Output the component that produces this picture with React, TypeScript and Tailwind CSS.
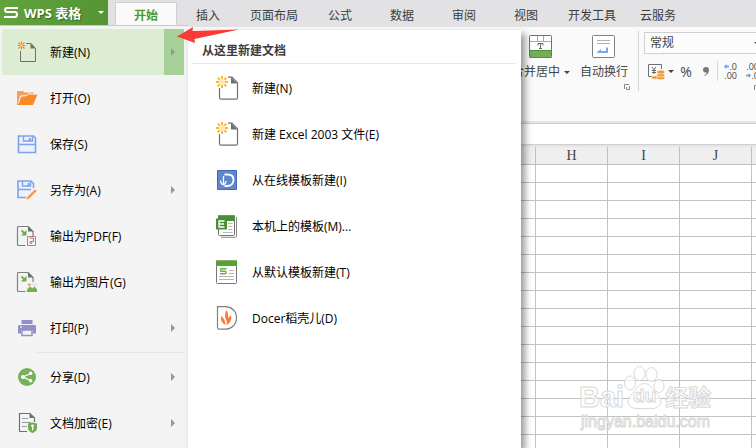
import type { ReactNode } from "react";

const FONT = "font-['Open_Sans','Noto_Sans_CJK_SC',sans-serif]";

const tabs = ["开始", "插入", "页面布局", "公式", "数据", "审阅", "视图", "开发工具", "云服务"];
const columns = ["", "H", "I", "J", ""];
const rows = Array.from({ length: 40 }, (_, i) => i);

function Caret({ className = "" }: { className?: string }) {
  return (
    <svg className={`h-[3px] w-[6px] shrink-0 ${className}`} viewBox="0 0 6 3" aria-hidden="true">
      <path d="M0 0h6L3 3z" fill="currentColor" />
    </svg>
  );
}

function Launcher() {
  return (
    <svg className="size-[6px] shrink-0" viewBox="0 0 6 6" fill="none" stroke="#888" aria-hidden="true">
      <path d="M.5 5V.5H5M5.500 2v3.500H2.500V3" />
    </svg>
  );
}

function Icon({ children, large = false }: { children: ReactNode; large?: boolean }) {
  return large ? (
    <svg className="size-[24px] shrink-0" viewBox="0 0 24 24" fill="none" aria-hidden="true">{children}</svg>
  ) : (
    <svg className="size-[22px] shrink-0" viewBox="0 0 22 22" fill="none" aria-hidden="true">{children}</svg>
  );
}

const NewSmall = (
  <Icon>
    <path d="M10 2.500h5l4.500 5v13h-15V10" stroke="#707070" />
    <path d="M14.500 2l5.500 5.500h-5.500z" fill="#707070" />
    <path d="M5.500 .5v8M1.500 4.500h8M2.500 1.500l6 6M8.500 1.500l-6 6" stroke="#f58a2c" strokeWidth="1.100" />
    <circle cx="5.500" cy="4.500" r="1.200" fill="#fbd9a8" />
  </Icon>
);

const OpenIcon = (
  <Icon>
    <path d="M1 4h6l1.500 1.500H18V9H5l-2.500 9H1z" fill="#f5a05a" />
    <path d="M5 9.500l6-.5 2-1.500h8.500L17 18H2z" fill="#fa8a24" />
    <path d="M2.500 16.500L4.500 9l6-.5 2-1.500h8" stroke="#fff4e8" />
  </Icon>
);

const SaveIcon = (
  <Icon>
    <path d="M3 3h14.500L19.500 5v14.500H2.500V3z" fill="#eff1f6" stroke="#7ba3ef" strokeWidth="1.600" />
    <path d="M7.500 3v5h9V3M2.500 11.500h17" stroke="#7ba3ef" strokeWidth="1.400" />
    <path d="M12.800 5h2v3h-2z" fill="#7ba3ef" />
  </Icon>
);

const SaveAsIcon = (
  <Icon>
    <path d="M10 18.500H2V2h13l2.500 2.500V9" fill="#eef2fa" stroke="#7ba3ef" strokeWidth="1.600" />
    <path d="M6.500 2v5h8V2M2 10.500h13" stroke="#7ba3ef" strokeWidth="1.400" />
    <path d="M11.500 4h2v3h-2z" fill="#7ba3ef" />
    <path d="M10 21l1-3 8-8 2 2-8 8z" fill="#f39a50" stroke="#f4f4f4" strokeWidth=".5" />
  </Icon>
);

const exportPage = (
  <>
    <path d="M9.500 20.500h-7a1 1 0 0 1-1-1v-17a1 1 0 0 1 1-1H12l5 5V11" stroke="#808080" strokeWidth="1.200" />
    <path d="M12 1l5.500 5.500H12z" fill="#707070" />
    <path d="M5.500 5.500l3 3" stroke="#6fae4d" strokeWidth="1.800" />
    <path d="M10.500 5v5.500H5z" fill="#6fae4d" />
  </>
);

const PdfIcon = (
  <Icon>
    {exportPage}
    <path d="M11.500 11.500h8v9h-8z" fill="#faf3f3" stroke="#a58a8a" />
    <path d="M13.500 13h4v3.500H15c-1.500 0-1.500 2 0 2s.5-2-.5-2" stroke="#e06666" />
  </Icon>
);

const PictureIcon = (
  <Icon>
    {exportPage}
    <path d="M11 12h10v9H11z" fill="#e6eef0" />
    <path d="M11 21v-2.500l3-3 2.500 2 2-2 2.500 3V21z" fill="#74ae51" />
    <circle cx="13.300" cy="13.800" r="1.300" fill="#f39a50" />
  </Icon>
);

const PrintIcon = (
  <Icon>
    <path d="M5.500 3h11v4h-11z" fill="#918fcb" />
    <path d="M2 9l1-1h16l1 1v7.500h-3V13H5v3.500H2z" fill="#918fcb" />
    <path d="M6 13h10v5.500H6z" fill="#f4f4f4" stroke="#918fcb" strokeWidth="1.500" />
    <path d="M4 10h2" stroke="#fff" />
  </Icon>
);

const ShareIcon = (
  <Icon>
    <circle cx="11" cy="11" r="9" fill="#78b15c" />
    <path d="M14.500 7.500L7 11l7.500 3.500" stroke="#fff" strokeWidth="1.300" />
    <g fill="#fff"><circle cx="14.700" cy="7.300" r="1.700" /><circle cx="7" cy="11" r="2" /><circle cx="14.700" cy="14.700" r="1.700" /></g>
  </Icon>
);

const EncryptIcon = (
  <Icon>
    <path d="M11 19.500H4a.5.5 0 0 1-.5-.5V1.500H14L18.500 6v4" stroke="#707070" strokeWidth="1.200" />
    <path d="M13.500 1l5 5h-5z" fill="#707070" />
    <path d="M6 6.500h6M6 10.500h9M6 14.500h5" stroke="#999" />
    <path d="M12 11.500l4.500-1 4.500 1v4.500c0 2.500-2 4-4.500 5-2.500-1-4.500-2.500-4.500-5z" fill="#6fae4d" />
    <path d="M16.500 14v4.500M16.500 16.500h1.500" stroke="#fff" /><circle cx="16.500" cy="13.800" r="1.400" fill="#fff" />
  </Icon>
);

const NewLarge = (
  <Icon large>
    <path d="M12 1.200h4l5.500 5.500v15a1.500 1.500 0 0 1-1.500 1.500H5a1.500 1.500 0 0 1-1.500-1.500V12" stroke="#707070" strokeWidth="1.200" />
    <path d="M15 1l6.500 6.500H15z" fill="#707070" />
    <path d="M6 0v3M6 9v3M0 6h3M9 6h3M1.700 1.700l2 2M8.300 8.300l2 2M10.300 1.700l-2 2M3.700 8.300l-2 2" stroke="#fbb62f" strokeWidth="2" />
    <circle cx="6" cy="6" r="3.200" fill="#fde9bd" />
  </Icon>
);

const OnlineTemplate = (
  <Icon large>
    <path d="M1.500 2.500h19v19h-19z" fill="#5f87cb" stroke="#416cb5" />
    <path d="M8.500 6.500h3c4 0 6 2.300 6 5.300s-2 6.200-6.500 6.200H8.500" stroke="#fff" strokeWidth="1.800" />
    <path d="M7.500 17c-2-1-3-2.500-3-4.500M7.500 17V8M7.500 17c2-1 2.500-2.300 2.500-4" stroke="#fff" strokeWidth="1.300" />
  </Icon>
);

const LocalTemplate = (
  <Icon large>
    <path d="M5 23.300h14.500a1 1 0 0 0 1-1V3" stroke="#888" />
    <path d="M2.500 2h16v18.500a1 1 0 0 1-1 1h-14a1 1 0 0 1-1-1z" fill="#fff" stroke="#707070" />
    <path d="M2 1.300h17V7H2z" fill="#4a8f36" />
    <path d="M12 9.500h4.500M12 12.500h4.500M12 15.500h4.500M7 18.500h9.500" stroke="#bbb" />
    <path d="M0 4.500h11v11H0z" fill="#4a8f36" />
    <path d="M8.500 7H3v6h5.500M3 10h5" stroke="#fff" strokeWidth="1.300" />
  </Icon>
);

const DefaultTemplate = (
  <Icon large>
    <path d="M.5 1h20v21.500a1 1 0 0 1-1 1h-18a1 1 0 0 1-1-1z" fill="#fff" stroke="#777" />
    <path d="M0 .5h21V6H0z" fill="#55a331" />
    <path d="M13 10.500h5M13 13.500h5M3 16.500h15M3 19.500h15" stroke="#b5b5b5" />
    <path d="M10.500 8.800H5.200c-1 0-1 2.400 0 2.400h4c1.200 0 1.200 2.600 0 2.600H4" stroke="#68b144" strokeWidth="1.400" />
  </Icon>
);

const DocerIcon = (
  <Icon large>
    <path d="M1.500.7h7.500c6.500 0 11.500 4.300 11.500 11s-5 11.500-11.500 11.500H3a1.500 1.500 0 0 1-1.500-1.500z" fill="#fff" stroke="#808080" strokeWidth="1.200" />
    <path d="M10.500 4c2 3 2.500 8 .5 12-2.500-4-2.500-8-.5-12zM5 10c2.500 1.500 4.500 4.500 4.500 9C6 17.500 4.500 14 5 10zM15 9.500c1 4-.5 7.500-4.500 9.500 0-4.500 1.500-8 4.500-9.500z" fill="#fb7a3c" />
  </Icon>
);

type Entry = { label: string; icon: ReactNode; sub?: boolean };

const fileMenu: Entry[] = [
  { label: "新建(N)", icon: NewSmall, sub: true },
  { label: "打开(O)", icon: OpenIcon },
  { label: "保存(S)", icon: SaveIcon },
  { label: "另存为(A)", icon: SaveAsIcon, sub: true },
  { label: "输出为PDF(F)", icon: PdfIcon },
  { label: "输出为图片(G)", icon: PictureIcon },
  { label: "打印(P)", icon: PrintIcon, sub: true },
];

const shareMenu: Entry[] = [
  { label: "分享(D)", icon: ShareIcon, sub: true },
  { label: "文档加密(E)", icon: EncryptIcon, sub: true },
];

const newMenu: Entry[] = [
  { label: "新建(N)", icon: NewLarge },
  { label: "新建 Excel 2003 文件(E)", icon: NewLarge },
  { label: "从在线模板新建(I)", icon: OnlineTemplate },
  { label: "本机上的模板(M)...", icon: LocalTemplate },
  { label: "从默认模板新建(T)", icon: DefaultTemplate },
  { label: "Docer稻壳儿(D)", icon: DocerIcon },
];

function FileItem({ label, icon, sub, active = false }: Entry & { active?: boolean }) {
  return (
    <button type="button" className={`flex h-[46px] w-full items-center pl-[14px] text-left ${active ? "bg-[#dcedd3]" : ""}`}>
      {icon}
      <span className="ml-3 flex-1 pt-[2px] whitespace-nowrap">{label}</span>
      {sub && (
        <span className={`flex h-full w-5 items-center justify-center ${active ? "bg-[#a6d199]" : ""}`}>
          <svg className="mr-[3px] h-[8px] w-[4px]" viewBox="0 0 4 8" aria-hidden="true">
            <path d="M0 0l4 4-4 4z" fill="#979797" />
          </svg>
        </span>
      )}
    </button>
  );
}

function TitleBar() {
  return (
    <header className="flex h-[27px] shrink-0 items-start bg-[#e2e2e4]">
      <button type="button" className="mr-[7px] flex h-[25px] w-[108px] shrink-0 items-center bg-linear-to-r from-[#62a33e] to-[#569434] pl-1 text-white">
        <svg className="h-[11px] w-[14px]" viewBox="0 0 14 11" fill="none" stroke="#fff" strokeWidth="2" aria-hidden="true">
          <path d="M14 1H3C.5 1 .5 5 3 5h8.500C13.500 5.500 13.500 10 11 10H0" />
        </svg>
        <span className="ml-[6px] flex-1 pt-[2px] text-left text-[13px] font-bold whitespace-nowrap [text-shadow:1px_1px_1px_#35651c]">WPS 表格</span>
        <Caret className="mr-1" />
      </button>
      <nav className="flex h-full flex-1 items-end overflow-hidden">
        {tabs.map((tab, i) => (
          <button
            key={tab}
            type="button"
            className={`h-[25px] min-w-[62px] shrink-0 pt-[2px] whitespace-nowrap ${
              i === 0
                ? "border-x border-t border-[#cfcfd2] bg-[#fafafa] font-bold text-[#4c9a22]"
                : "px-[11px] text-[#3c3c3c]"
            }`}
          >
            {tab}
          </button>
        ))}
      </nav>
    </header>
  );
}

function Ribbon() {
  return (
    <section className="flex h-[94px] shrink-0 items-start overflow-hidden bg-[#fafafa] pt-1 pl-[512px] text-[#444]">
      <div className="flex h-[60px] w-[127px] shrink-0 flex-col border-r border-[#d6d6d8] pt-1">
        <div className="flex gap-[10px]">
          <button type="button" className="flex flex-col items-center gap-[5px]">
            <svg className="size-[24px]" viewBox="0 0 24 24" fill="none" aria-hidden="true">
              <rect x=".5" y=".5" width="22" height="22" rx="1" fill="#fff" stroke="#707070" />
              <path d="M1 6.500h21M8.500 1v5M14.500 1v5" stroke="#aaa" />
              <path d="M1 16h21v6H1z" fill="#74ae58" />
              <path d="M.5 15.500h22M.5 22.500h22" stroke="#4f9038" />
              <path d="M9 10.500v-2h5v2M11.500 8.500v5M10 13.500h3" stroke="#666" />
            </svg>
            <span className="flex h-4 items-center gap-1 whitespace-nowrap">合并居中<Caret /></span>
          </button>
          <button type="button" className="flex flex-col items-center gap-[5px]">
            <svg className="size-[24px]" viewBox="0 0 24 24" fill="none" aria-hidden="true">
              <rect x=".5" y=".5" width="22" height="22" rx="1" fill="#fff" stroke="#808080" />
              <path d="M5 5.500h13M5 8.500h13" stroke="#b0b0b0" />
              <path d="M15 12.500v4.500H8" stroke="#7ba3ef" strokeWidth="2" />
              <path d="M5 17l4-3v4H5z" fill="#7ba3ef" />
            </svg>
            <span className="h-4 leading-4 whitespace-nowrap">自动换行</span>
          </button>
        </div>
        <div className="mt-1 flex justify-end pr-2"><Launcher /></div>
      </div>

      <div className="ml-[5px] flex w-[119px] shrink-0 flex-col pt-px">
        <label className="relative flex">
          <select aria-label="数字格式" className="h-[22px] w-full appearance-none border border-[#d0d0d2] bg-[#fcfcfc] pl-[5px]">
            <option>常规</option>
            <option>数值</option>
            <option>货币</option>
          </select>
          <Caret className="absolute top-[10px] right-[3px]" />
        </label>
        <div className="mt-[7px] flex h-5 items-center">
          <button type="button" aria-label="货币" className="ml-1 flex items-center gap-[3px]">
            <svg className="h-[17px] w-[17px]" viewBox="0 0 17 17" fill="none" aria-hidden="true">
              <path d="M4 13.500H.5v-12h13V6" stroke="#707070" />
              <path d="M4 4l2 2.500L8 4M6 6.500V11M4 7.500h4M4 9.500h4" stroke="#555" strokeWidth=".9" />
              <g fill="#f0983c" stroke="#fff" strokeWidth=".6">
                <ellipse cx="7" cy="14.500" rx="3.500" ry="1.800" />
                <ellipse cx="12.700" cy="14.800" rx="4" ry="2" />
                <ellipse cx="12.700" cy="12" rx="4" ry="2" />
                <ellipse cx="12.700" cy="9" rx="4" ry="2" />
              </g>
            </svg>
            <Caret />
          </button>
          <button type="button" className="ml-[6px] w-3 text-[14px]">%</button>
          <button type="button" aria-label="千位分隔" className="ml-[11px]">
            <svg className="h-[9px] w-[6px]" viewBox="0 0 6 9" aria-hidden="true">
              <path d="M3 0c2 0 3 1.200 3 3 0 3-2 5-4.500 6v-1C3 7.200 3.700 6.500 3.700 5.500 1.500 6 0 4.700 0 3c0-1.800 1.200-3 3-3z" fill="#777" />
            </svg>
          </button>
          <span className="ml-2 h-5 w-px shrink-0 bg-[#d6d6d8]" />
          <button type="button" aria-label="增加小数位数" className="ml-[5px] flex w-[14px] shrink-0 flex-col items-end text-[9px] leading-[9px]">
            <span className="flex items-center"><BlueArrow />.0</span>
            <span>.00</span>
          </button>
          <button type="button" aria-label="减少小数位数" className="ml-2 flex w-[14px] shrink-0 flex-col items-end text-[9px] leading-[9px]">
            <span>.00</span>
            <span className="flex items-center"><BlueArrow flip />.0</span>
          </button>
        </div>
        <div className="mt-1 flex justify-end pr-[3px]"><Launcher /></div>
      </div>
    </section>
  );
}

function BlueArrow({ flip = false }: { flip?: boolean }) {
  return (
    <svg className="h-[5px] w-[5px] shrink-0" viewBox="0 0 5 5" aria-hidden="true">
      <path d={flip ? "M5 2.500L2.500 0v1.700H0v1.600h2.500V5z" : "M0 2.500L2.500 0v1.700H5v1.600H2.500V5z"} fill="#6a97ec" />
    </svg>
  );
}

function Sheet() {
  return (
    <main className="min-h-0 flex-1 overflow-hidden bg-white pl-[464px]">
      <table className="w-[360px] table-fixed border-separate border-spacing-0">
        <thead>
          <tr>
            {columns.map((name, i) => (
              <th key={i} className="h-[18px] w-[72px] border-r border-b border-[#c0c0c0] bg-[#efefef] p-0 pt-px font-['Liberation_Serif',serif] text-[14px] leading-4 font-normal text-[#444]">
                {name}
              </th>
            ))}
          </tr>
        </thead>
        <tbody>
          {rows.map((row) => (
            <tr key={row}>
              {columns.map((_, i) => (
                <td key={i} className="h-[18px] border-r border-b border-[#c3c3c3] p-0" />
              ))}
            </tr>
          ))}
        </tbody>
      </table>
    </main>
  );
}

function FileMenu() {
  return (
    <div className="absolute top-[25px] bottom-0 left-0 flex text-black">
      <nav className="w-[188px] shrink-0 border-t border-[#c8c8c8] bg-[#f4f4f4] pt-[3px] pr-1 pl-[2px]">
        {fileMenu.map((item, i) => (
          <FileItem key={item.label} {...item} active={i === 0} />
        ))}
        <div className="mb-px ml-[35px] h-[2px] border-b border-[#e6e6e6]" />
        {shareMenu.map((item) => (
          <FileItem key={item.label} {...item} />
        ))}
      </nav>
      <section className="mt-[5px] w-[333px] shrink-0 bg-white shadow-[4px_4px_7px_rgba(0,0,0,0.4)]">
        <h2 className="mr-[5px] ml-1 h-[34px] border-b border-[#e8e8e8] pl-[10px] leading-[42px] font-bold text-[#3c3c3c]">从这里新建文档</h2>
        <div className="pt-px">
          {newMenu.map((item) => (
            <button key={item.label} type="button" className="flex h-[46px] w-full items-center gap-3 pl-7 text-left whitespace-nowrap">
              {item.icon}
              <span className="pt-[2px]">{item.label}</span>
            </button>
          ))}
        </div>
      </section>
    </div>
  );
}

function Watermark() {
  return (
    <div className="pointer-events-none absolute top-[364px] left-[579px] w-[136px] text-white/70 [-webkit-text-stroke:1px_#d9d9d9]">
      <div className="flex h-[46px] items-end whitespace-nowrap">
        <span className="font-['Liberation_Sans',sans-serif] text-[29px] leading-[26px] font-bold">Bai</span>
        <div className="relative">
          <svg className="h-[46px] w-[41px]" viewBox="0 0 41 46" fill="#fff" fillOpacity=".7" stroke="#d9d9d9" aria-hidden="true">
            <ellipse cx="6" cy="19" rx="5.500" ry="7" />
            <ellipse cx="15.500" cy="9.500" rx="5.500" ry="7" />
            <ellipse cx="27.500" cy="10.500" rx="5.500" ry="7" />
            <ellipse cx="35" cy="22" rx="5" ry="6.500" />
            <path d="M20.500 19.500c6 0 8 6 12 10s6 8 3 12-9 3-15 3-12 1-15-3-1-8 3-12 6-10 12-10z" />
          </svg>
          <span className="absolute top-[22px] left-[9px] font-['Liberation_Sans',sans-serif] text-[19px] leading-5 font-bold">du</span>
        </div>
        <span className="text-[23px] leading-[26px] font-bold">经验</span>
      </div>
      <div className="pl-[2px] font-['Liberation_Sans',sans-serif] text-[16px] leading-6">jingyan.baidu.com</div>
    </div>
  );
}

export default function App() {
  return (
    <div className={`relative flex h-screen flex-col overflow-hidden bg-white text-[12px] ${FONT}`}>
      <TitleBar />
      <Ribbon />
      <div className="h-[3px] shrink-0 border-b border-[#cfcfd2] bg-[#e4e4e6]" />
      <div className="h-5 shrink-0 bg-white" />
      <div className="h-[3px] shrink-0 border-t border-[#cfcfd5] bg-[#e4e4e8]" />
      <Sheet />
      <Watermark />
      <FileMenu />
      <svg className="absolute top-[26px] left-[177px] h-[18px] w-[62px]" viewBox="0 0 62 18" aria-hidden="true">
        <path d="M0 10.500L16 1l-.5 4L62 3.500 17.500 13l.5 4z" fill="#f93a36" />
      </svg>
    </div>
  );
}
